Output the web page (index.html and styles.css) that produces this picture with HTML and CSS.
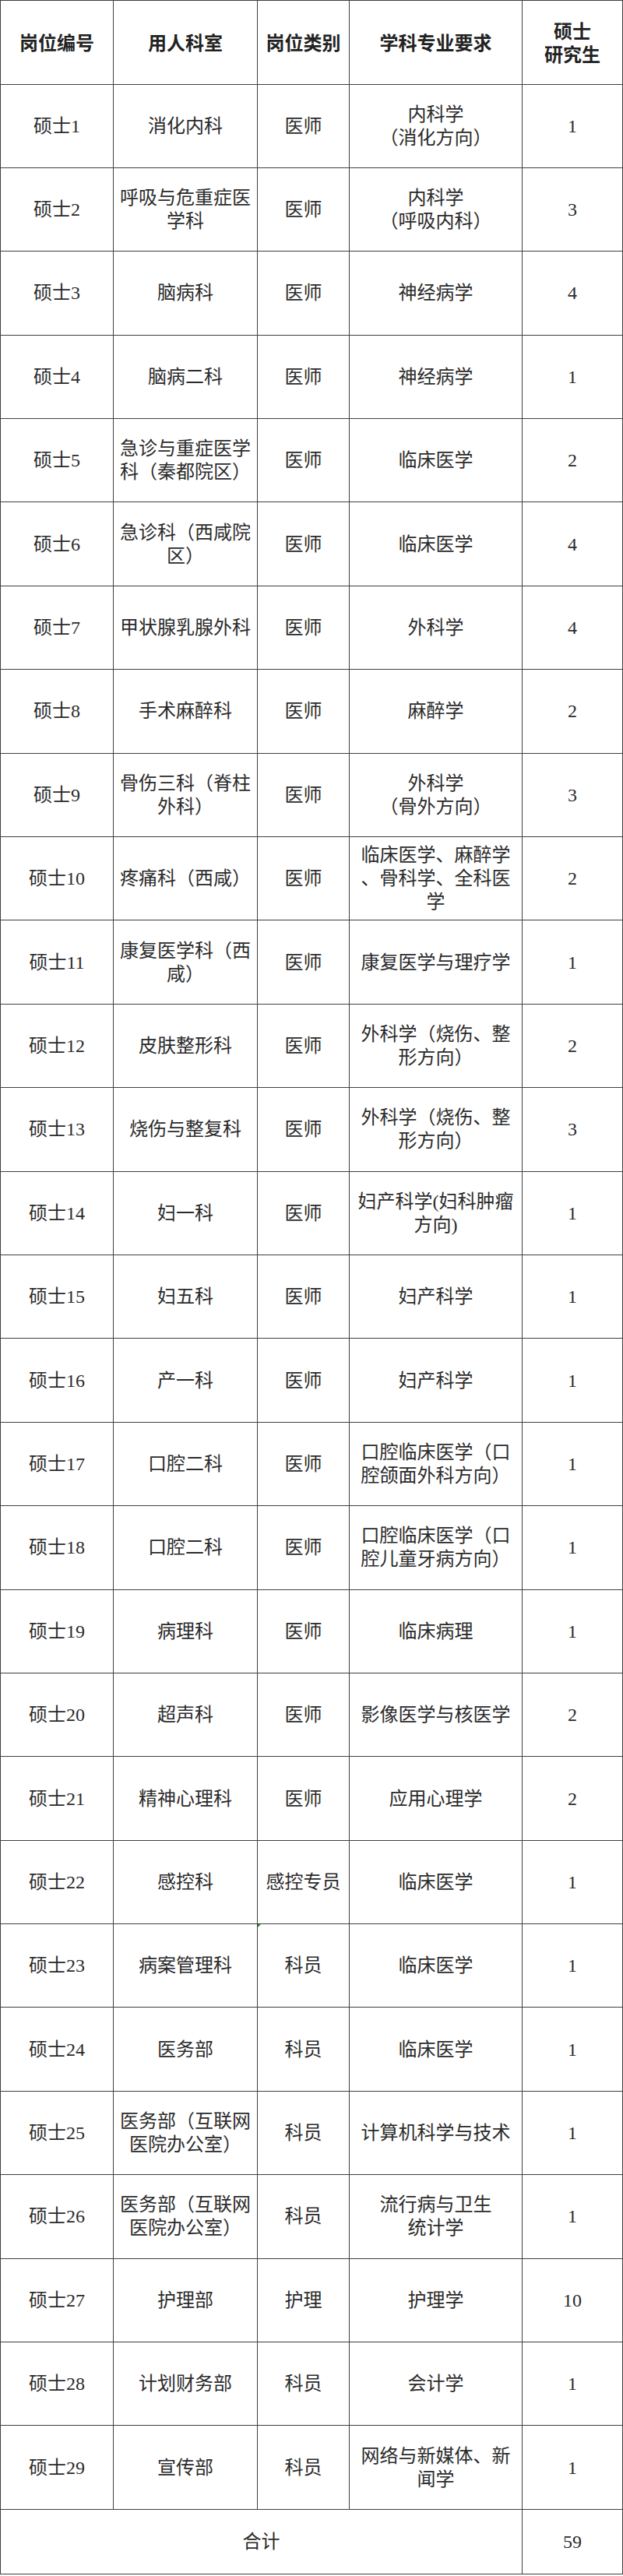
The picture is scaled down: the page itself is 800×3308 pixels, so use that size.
FILE: index.html
```html
<!DOCTYPE html>
<html lang="zh-CN">
<head>
<meta charset="utf-8">
<title>岗位需求表</title>
<link rel="stylesheet" href="styles.css">
</head>
<body>
<table class="sheet">
  <colgroup>
    <col class="c1"><col class="c2"><col class="c3"><col class="c4"><col class="c5">
  </colgroup>
  <thead>
    <tr class="head">
      <th>岗位编号</th><th>用人科室</th><th>岗位类别</th><th>学科专业要求</th><th>硕士<br>研究生</th>
    </tr>
  </thead>
  <tbody>
    <tr><td>硕士1</td><td>消化内科</td><td>医师</td><td>内科学<br>（消化方向）</td><td>1</td></tr>
    <tr><td>硕士2</td><td>呼吸与危重症医<br>学科</td><td>医师</td><td>内科学<br>（呼吸内科）</td><td>3</td></tr>
    <tr><td>硕士3</td><td>脑病科</td><td>医师</td><td>神经病学</td><td>4</td></tr>
    <tr><td>硕士4</td><td>脑病二科</td><td>医师</td><td>神经病学</td><td>1</td></tr>
    <tr><td>硕士5</td><td>急诊与重症医学<br>科（秦都院区）</td><td>医师</td><td>临床医学</td><td>2</td></tr>
    <tr><td>硕士6</td><td>急诊科（西咸院<br>区）</td><td>医师</td><td>临床医学</td><td>4</td></tr>
    <tr><td>硕士7</td><td>甲状腺乳腺外科</td><td>医师</td><td>外科学</td><td>4</td></tr>
    <tr><td>硕士8</td><td>手术麻醉科</td><td>医师</td><td>麻醉学</td><td>2</td></tr>
    <tr><td>硕士9</td><td>骨伤三科（脊柱<br>外科）</td><td>医师</td><td>外科学<br>（骨外方向）</td><td>3</td></tr>
    <tr><td>硕士10</td><td>疼痛科（西咸）</td><td>医师</td><td>临床医学、麻醉学<br>、骨科学、全科医<br>学</td><td>2</td></tr>
    <tr><td>硕士11</td><td>康复医学科（西<br>咸）</td><td>医师</td><td>康复医学与理疗学</td><td>1</td></tr>
    <tr><td>硕士12</td><td>皮肤整形科</td><td>医师</td><td>外科学（烧伤、整<br>形方向）</td><td>2</td></tr>
    <tr><td>硕士13</td><td>烧伤与整复科</td><td>医师</td><td>外科学（烧伤、整<br>形方向）</td><td>3</td></tr>
    <tr><td>硕士14</td><td>妇一科</td><td>医师</td><td>妇产科学(妇科肿瘤<br>方向)</td><td>1</td></tr>
    <tr><td>硕士15</td><td>妇五科</td><td>医师</td><td>妇产科学</td><td>1</td></tr>
    <tr><td>硕士16</td><td>产一科</td><td>医师</td><td>妇产科学</td><td>1</td></tr>
    <tr><td>硕士17</td><td>口腔二科</td><td>医师</td><td>口腔临床医学（口<br>腔颌面外科方向）</td><td>1</td></tr>
    <tr><td>硕士18</td><td>口腔二科</td><td>医师</td><td>口腔临床医学（口<br>腔儿童牙病方向）</td><td>1</td></tr>
    <tr><td>硕士19</td><td>病理科</td><td>医师</td><td>临床病理</td><td>1</td></tr>
    <tr><td>硕士20</td><td>超声科</td><td>医师</td><td>影像医学与核医学</td><td>2</td></tr>
    <tr><td>硕士21</td><td>精神心理科</td><td>医师</td><td>应用心理学</td><td>2</td></tr>
    <tr><td>硕士22</td><td>感控科</td><td>感控专员</td><td>临床医学</td><td>1</td></tr>
    <tr><td>硕士23</td><td>病案管理科</td><td class="flagged"><span class="flag"></span>科员</td><td>临床医学</td><td>1</td></tr>
    <tr><td>硕士24</td><td>医务部</td><td>科员</td><td>临床医学</td><td>1</td></tr>
    <tr><td>硕士25</td><td>医务部（互联网<br>医院办公室）</td><td>科员</td><td>计算机科学与技术</td><td>1</td></tr>
    <tr><td>硕士26</td><td>医务部（互联网<br>医院办公室）</td><td>科员</td><td>流行病与卫生<br>统计学</td><td>1</td></tr>
    <tr><td>硕士27</td><td>护理部</td><td>护理</td><td>护理学</td><td>10</td></tr>
    <tr><td>硕士28</td><td>计划财务部</td><td>科员</td><td>会计学</td><td>1</td></tr>
    <tr><td>硕士29</td><td>宣传部</td><td>科员</td><td>网络与新媒体、新<br>闻学</td><td>1</td></tr>
    <tr class="total"><td colspan="4">合计</td><td>59</td></tr>
  </tbody>
</table>
</body>
</html>
```
FILE: styles.css
```css
html, body {
  margin: 0;
  padding: 0;
  background: #ffffff;
}

.sheet {
  border-collapse: collapse;
  table-layout: fixed;
  width: 799px;
  font-family: "Liberation Serif", "Noto Sans CJK SC", serif;
  font-size: 24px;
  line-height: 30px;
  color: #2b2b2b;
}

.c1 { width: 145px; }
.c2 { width: 185px; }
.c3 { width: 118px; }
.c4 { width: 222px; }
.c5 { width: 129px; }

.sheet th,
.sheet td {
  border: 1px solid #3f3f3f;
  padding: 0 2px;
  text-align: center;
  vertical-align: middle;
  white-space: nowrap;
}

.sheet th {
  font-family: "Noto Sans CJK SC", sans-serif;
  font-weight: 700;
  color: #222222;
}

.sheet td {
  font-weight: 400;
}

.head {
  height: 107.5px;
}

.sheet tbody tr {
  height: 107.4px;
}

.sheet tbody tr.total {
  height: 83.4px;
}

.flagged {
  position: relative;
}

.flag {
  position: absolute;
  left: 0;
  top: 0;
  width: 0;
  height: 0;
  border-top: 4px solid #1f8f1f;
  border-right: 4px solid transparent;
}
```
